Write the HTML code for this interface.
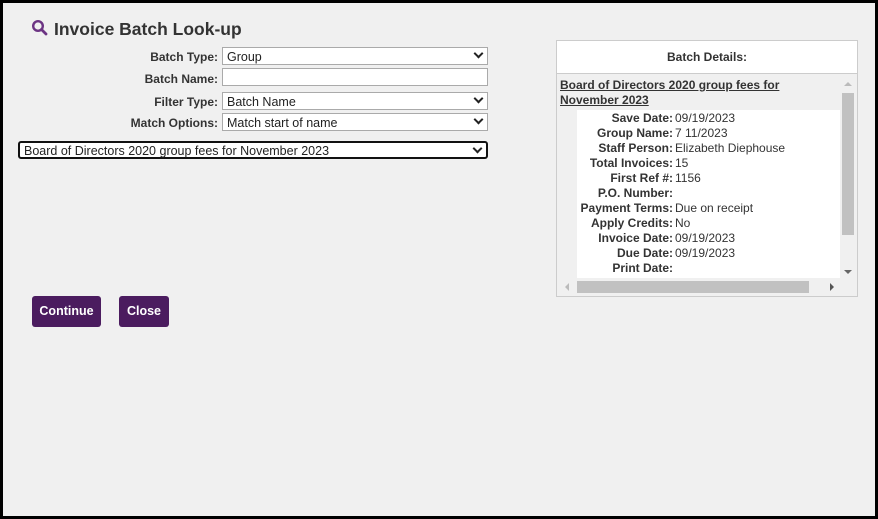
<!DOCTYPE html>
<html><head><style>
body{margin:0;width:878px;height:519px;overflow:hidden;font-family:"Liberation Sans",Arial,sans-serif;}
.frame{position:absolute;left:0;top:0;width:872px;height:513px;border:3px solid #000;background:#f0f0f0;}
.a{position:absolute}
.lbl{position:absolute;font-size:12px;font-weight:bold;color:#333;text-align:right;width:200px}
.sel{position:absolute;background:#fff;border:1px solid #aaa;height:18px;box-sizing:border-box;font-size:12.5px;color:#222;padding:2px 0 0 4px;line-height:15px}
.chev{position:absolute;right:5px;width:5px;height:5px;border-right:2px solid #222;border-bottom:2px solid #222;transform:rotate(45deg);top:2px}
.btn{position:absolute;background:#4b1c5f;color:#fff;font-size:12.5px;font-weight:bold;border-radius:3px;text-align:center;line-height:31px;height:31px}
.row{position:absolute;left:0;font-size:12px;line-height:15px;white-space:nowrap}
.row b{display:inline-block;width:96px;text-align:right;color:#333}
.row span{color:#333;margin-left:2px}
</style></head><body>
<div class="frame">
<svg class="a" style="left:28px;top:16px" width="18" height="18" viewBox="0 0 18 18"><circle cx="7" cy="7" r="4.8" fill="none" stroke="#6c3483" stroke-width="2.4"/><line x1="10.5" y1="10.5" x2="15" y2="15" stroke="#6c3483" stroke-width="2.8" stroke-linecap="round"/></svg>
<div class="a" style="left:51px;top:16px;font-size:17.5px;font-weight:bold;color:#333">Invoice Batch Look-up</div>

<div class="lbl" style="left:15px;top:47px">Batch Type:</div>
<div class="sel" style="left:219px;top:44px;width:266px">Group<i class="chev"></i></div>
<div class="lbl" style="left:15px;top:69px">Batch Name:</div>
<div class="sel" style="left:219px;top:65px;width:266px"></div>
<div class="lbl" style="left:15px;top:92px">Filter Type:</div>
<div class="sel" style="left:219px;top:89px;width:266px">Batch Name<i class="chev"></i></div>
<div class="lbl" style="left:15px;top:113px">Match Options:</div>
<div class="sel" style="left:219px;top:110px;width:266px">Match start of name<i class="chev"></i></div>
<div class="sel" style="left:15px;top:138px;width:470px;border:2px solid #111;border-radius:3px;padding-top:1px">Board of Directors 2020 group fees for November 2023<i class="chev"></i></div>

<div class="btn" style="left:29px;top:293px;width:69px">Continue</div>
<div class="btn" style="left:116px;top:293px;width:50px">Close</div>

<div class="a" style="left:553px;top:37px;width:300px;height:255px;border:1px solid #ccc;background:#f0f0f0">
 <div class="a" style="left:0;top:0;width:300px;height:32px;background:#fff;border-bottom:1px solid #ccc;text-align:center;font-size:12px;font-weight:bold;color:#333;line-height:32px">Batch Details:</div>
 <div class="a" style="left:3px;top:37px;font-size:12px;font-weight:bold;color:#333;text-decoration:underline;line-height:15px">Board of Directors 2020 group fees for<br>November 2023</div>
 <div class="a" style="left:20px;top:69px;width:263px;height:168px;background:#fff;overflow:hidden">
  <div class="row" style="top:1px"><b>Save Date:</b><span>09/19/2023</span></div>
  <div class="row" style="top:16px"><b>Group Name:</b><span>7 11/2023</span></div>
  <div class="row" style="top:31px"><b>Staff Person:</b><span>Elizabeth Diephouse</span></div>
  <div class="row" style="top:46px"><b>Total Invoices:</b><span>15</span></div>
  <div class="row" style="top:61px"><b>First Ref #:</b><span>1156</span></div>
  <div class="row" style="top:76px"><b>P.O. Number:</b><span></span></div>
  <div class="row" style="top:91px"><b>Payment Terms:</b><span>Due on receipt</span></div>
  <div class="row" style="top:106px"><b>Apply Credits:</b><span>No</span></div>
  <div class="row" style="top:121px"><b>Invoice Date:</b><span>09/19/2023</span></div>
  <div class="row" style="top:136px"><b>Due Date:</b><span>09/19/2023</span></div>
  <div class="row" style="top:151px"><b>Print Date:</b><span></span></div>
  <div class="row" style="top:166px"><b>Email Date:</b><span></span></div>
 </div>
 <div class="a" style="left:283px;top:34px;width:15px;height:203px;background:#f0f0f0"></div>
 <div class="a" style="left:285px;top:52px;width:12px;height:142px;background:#c1c1c1"></div>
 <div class="a" style="left:287px;top:41px;border:4px solid transparent;border-bottom:4px solid #bbb;border-top:0"></div>
 <div class="a" style="left:287px;top:229px;border:4px solid transparent;border-top:4px solid #666;border-bottom:0"></div>
 <div class="a" style="left:0;top:237px;width:283px;height:16px;background:#f0f0f0"></div>
 <div class="a" style="left:20px;top:240px;width:232px;height:12px;background:#c1c1c1"></div>
 <div class="a" style="left:8px;top:242px;border:4px solid transparent;border-right:4px solid #bbb;border-left:0"></div>
 <div class="a" style="left:273px;top:242px;border:4px solid transparent;border-left:4px solid #555;border-right:0"></div>
</div>
</div>
</body></html>
